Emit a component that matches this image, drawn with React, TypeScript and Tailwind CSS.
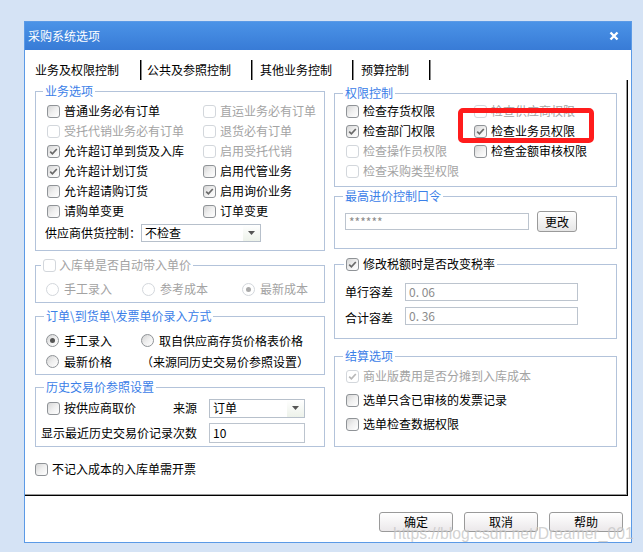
import clsx from 'clsx'
import type { ReactNode } from 'react'

function Box({ checked = false, disabled = false }: { checked?: boolean; disabled?: boolean }) {
  return (
    <span
      className={clsx(
        'flex h-[13px] w-[13px] shrink-0 items-center justify-center rounded-[3px] border',
        disabled
          ? 'border-[#d3d7dc] bg-white'
          : 'border-[#8f9397] bg-gradient-to-br from-[#d6d6d6] via-[#f0f0f0] to-white',
      )}
    >
      {checked && (
        <svg width="9" height="9" viewBox="0 0 9 9" fill="none">
          <path d="M1.2 4.6 3.4 6.8 7.8 2" stroke={disabled ? '#b8b8b8' : '#6a6a6a'} strokeWidth="1.7" />
        </svg>
      )}
    </span>
  )
}

function Dot({ on = false, disabled = false }: { on?: boolean; disabled?: boolean }) {
  return (
    <span
      className={clsx(
        'flex h-[13px] w-[13px] shrink-0 items-center justify-center rounded-full border',
        disabled
          ? 'border-[#d3d7dc] bg-white'
          : 'border-[#8f9397] bg-gradient-to-br from-[#d2d2d2] via-[#efefef] to-white',
      )}
    >
      {on && <span className={clsx('h-[5px] w-[5px] rounded-full', disabled ? 'bg-[#a9a9a9]' : 'bg-[#555]')} />}
    </span>
  )
}

function Check({
  label,
  checked,
  disabled,
  className,
}: {
  label: string
  checked?: boolean
  disabled?: boolean
  className?: string
}) {
  return (
    <div className={clsx('flex items-center gap-[4px]', className ?? 'h-[20px]')}>
      <Box checked={checked} disabled={disabled} />
      <span className={clsx('whitespace-nowrap', disabled ? 'text-[#a3a3a3]' : 'text-black')}>{label}</span>
    </div>
  )
}

function Radio({ label, on, disabled }: { label: string; on?: boolean; disabled?: boolean }) {
  return (
    <div className="flex items-center gap-[5px]">
      <Dot on={on} disabled={disabled} />
      <span className={clsx('whitespace-nowrap', disabled ? 'text-[#a3a3a3]' : 'text-black')}>{label}</span>
    </div>
  )
}

function Group({
  legend,
  className,
  legendClass,
  children,
}: {
  legend: ReactNode
  className?: string
  legendClass?: string
  children?: ReactNode
}) {
  return (
    <div className={clsx('border border-[#b3c3da]', className)}>
      <div
        className={clsx(
          '-mt-[9px] flex h-[16px] w-fit items-center bg-white px-[2px]',
          legendClass ?? 'ml-[7px] text-[#3b80e8]',
        )}
      >
        {legend}
      </div>
      {children}
    </div>
  )
}

function Select({ value, className }: { value: string; className?: string }) {
  return (
    <div className={clsx('flex items-center border border-[#b7c0cb] bg-white', className)}>
      <span className="flex-1 pl-[3px]">{value}</span>
      <span className="flex h-full w-[17px] items-center justify-center bg-gradient-to-b from-white to-[#edf2ea]">
        <svg width="7" height="4" viewBox="0 0 7 4">
          <path d="M0 0h7L3.5 4z" fill="#555" />
        </svg>
      </span>
    </div>
  )
}

function Field({ value, className }: { value: string; className?: string }) {
  return (
    <div className={clsx('flex items-center border border-[#bcc4ce] bg-white pl-[3px] text-[#8c8c8c]', className)}>
      {value}
    </div>
  )
}

function Button({ label }: { label: string }) {
  return (
    <button className="flex h-[20px] w-[74px] items-center justify-center rounded-[3px] border border-[#9a9a9a] bg-gradient-to-b from-white to-[#ebe8ea] text-black">
      {label}
    </button>
  )
}

const tabs = [
  { name: '业务及权限控制', cls: 'w-[106px]' },
  { name: '公共及参照控制', cls: 'w-[111px] pl-[6px]' },
  { name: '其他业务控制', cls: 'w-[101px] pl-[8px]' },
  { name: '预算控制', cls: 'w-[77px] pl-[8px]' },
]

export default function App() {
  return (
    <div className="h-[552px] w-[643px] overflow-hidden bg-[#d5e3f5] pl-[24px] pt-[21px] font-['Noto_Sans_CJK_SC','Noto_Sans',sans-serif] text-[12px] leading-[16px] text-black">
      <div className="flex h-[522px] w-[608px] flex-col border border-[#5b9ae6] bg-white">
        {/* title bar */}
        <div className="flex h-[28px] shrink-0 items-center justify-between bg-gradient-to-b from-[#4b93e7] to-[#387bd6] pl-[3px] pr-[12px] text-white">
          <span>采购系统选项</span>
          <svg width="10" height="10" viewBox="0 0 10 10">
            <path d="M1.5 1.5 8.5 8.5M8.5 1.5 1.5 8.5" stroke="white" strokeWidth="2.4" />
          </svg>
        </div>

        {/* tabs */}
        <div className="flex h-[30px] shrink-0 items-end pl-[10px]">
          {tabs.map((t) => (
            <div
              key={t.name}
              className={clsx(
                'flex h-[20px] items-center border-r border-black shadow-[1px_0_0_#8a8a8a]',
                t.cls,
              )}
            >
              {t.name}
            </div>
          ))}
        </div>

        {/* tab page */}
        <div className="h-[416px] w-[603px] shrink-0 border-b border-r border-black pl-[10px] pt-[11px] shadow-[inset_-1px_-1px_0_#9a9a9a]">
          <div className="flex gap-[9px]">
            {/* left column */}
            <div className="flex w-[290px] flex-col">
              <Group legend="业务选项" className="h-[160px]">
                <div className="mt-[2px] grid grid-cols-[156px_1fr] pl-[11px]">
                  <Check label="普通业务必有订单" />
                  <Check label="直运业务必有订单" disabled />
                  <Check label="受托代销业务必有订单" disabled />
                  <Check label="退货必有订单" disabled />
                  <Check label="允许超订单到货及入库" checked />
                  <Check label="启用受托代销" disabled />
                  <Check label="允许超计划订货" checked />
                  <Check label="启用代管业务" />
                  <Check label="允许超请购订货" />
                  <Check label="启用询价业务" checked />
                  <Check label="请购单变更" />
                  <Check label="订单变更" />
                </div>
                <div className="-ml-[2px] mt-[3px] flex h-[18px] items-center pl-[11px]">
                  <span className="w-[96px]">供应商供货控制：</span>
                  <Select value="不检查" className="h-[18px] w-[120px]" />
                </div>
              </Group>

              <Group
                legend={
                  <div className="flex items-center gap-[3px] text-[#a3a3a3]">
                    <Box disabled />
                    <span>入库单是否自动带入单价</span>
                  </div>
                }
                legendClass="ml-[5px]"
                className="mt-[14px] h-[38px]"
              >
                <div className="mt-[6px] grid h-[20px] grid-cols-[96px_100px_1fr] items-center pl-[10px]">
                  <Radio label="手工录入" disabled />
                  <Radio label="参考成本" disabled />
                  <Radio label="最新成本" on disabled />
                </div>
              </Group>

              <Group legend="订单\到货单\发票单价录入方式" className="mt-[13px] h-[59px]" legendClass="ml-[8px] text-[#3b80e8]">
                <div className="mt-[6px] grid grid-cols-[95px_1fr] pl-[10px]">
                  <div className="flex h-[21px] items-center">
                    <Radio label="手工录入" on />
                  </div>
                  <div className="flex h-[21px] items-center">
                    <Radio label="取自供应商存货价格表价格" on={false} />
                  </div>
                  <div className="flex h-[21px] items-center">
                    <Radio label="最新价格" />
                  </div>
                  <div className="flex h-[21px] items-center whitespace-nowrap">（来源同历史交易价参照设置）</div>
                </div>
              </Group>

              <Group legend="历史交易价参照设置" className="mt-[12px] h-[60px]" legendClass="ml-[8px] text-[#3b80e8]">
                <div className="mt-[3px] flex h-[20px] items-center pl-[11px]">
                  <Check label="按供应商取价" className="h-[20px] w-[126px]" />
                  <span className="w-[36px]">来源</span>
                  <Select value="订单" className="h-[19px] w-[96px]" />
                </div>
                <div className="mt-[5px] flex h-[20px] items-center pl-[5px]">
                  <span className="w-[168px] whitespace-nowrap">显示最近历史交易价记录次数</span>
                  <div className="flex h-[20px] w-[96px] items-center border border-[#bcc4ce] pl-[3px]">10</div>
                </div>
              </Group>
            </div>

            {/* right column */}
            <div className="mt-[2px] flex w-[283px] flex-col">
              <Group legend="权限控制" className="relative h-[94px]" legendClass="ml-[8px] text-[#3b80e8]">
                <div className="grid grid-cols-[128px_1fr] pl-[11px]">
                  <Check label="检查存货权限" />
                  <Check label="检查供应商权限" disabled />
                  <Check label="检查部门权限" checked />
                  <Check label="检查业务员权限" checked />
                  <Check label="检查操作员权限" disabled />
                  <Check label="检查金额审核权限" />
                  <Check label="检查采购类型权限" disabled />
                </div>
                <div className="absolute left-[123px] top-[14px] h-[35px] w-[136px] rounded-[5px] border-[5px] border-[#ff1c1c]" />
              </Group>

              <Group legend="最高进价控制口令" className="mt-[9px] h-[53px]" legendClass="ml-[8px] text-[#3b80e8]">
                <div className="mt-[7px] flex h-[21px] items-center gap-[8px] pl-[10px]">
                  <Field value="******" className="h-[17px] w-[184px]" />
                  <button className="flex h-[21px] w-[40px] items-center justify-center rounded-[3px] border border-[#9a9a9a] bg-gradient-to-b from-white to-[#e6e6e6]">
                    更改
                  </button>
                </div>
              </Group>

              <Group
                legend={
                  <div className="flex items-center gap-[4px]">
                    <Box checked />
                    <span>修改税额时是否改变税率</span>
                  </div>
                }
                legendClass="ml-[9px]"
                className="mt-[15px] h-[75px]"
              >
                <div className="mt-[11px] flex h-[18px] items-center pl-[10px]">
                  <span className="w-[60px]">单行容差</span>
                  <Field value="0. 06" className="h-[18px] w-[173px]" />
                </div>
                <div className="mt-[6px] flex h-[18px] items-center pl-[10px]">
                  <span className="w-[60px] pt-[3px]">合计容差</span>
                  <Field value="0. 36" className="h-[18px] w-[173px]" />
                </div>
              </Group>

              <Group legend="结算选项" className="mt-[17px] h-[91px]" legendClass="ml-[8px] text-[#3b80e8]">
                <div className="flex flex-col pl-[11px]">
                  <Check label="商业版费用是否分摊到入库成本" checked disabled className="h-[24px]" />
                  <Check label="选单只含已审核的发票记录" className="h-[24px]" />
                  <Check label="选单检查数据权限" className="h-[24px]" />
                </div>
              </Group>
            </div>
          </div>

          <Check label="不记入成本的入库单需开票" className="mt-[12px] h-[20px]" />
        </div>

        {/* buttons */}
        <div className="relative mt-[16px] flex h-[20px] justify-end gap-[11px] pr-[8px]">
          <Button label="确定" />
          <Button label="取消" />
          <Button label="帮助" />
          <span className="pointer-events-none absolute left-[368px] top-[13px] whitespace-nowrap font-['Liberation_Sans',sans-serif] text-[15.7px] leading-[18px] text-[#c6c6c6]/80">
            https://blog.csdn.net/Dreamer_001
          </span>
        </div>
      </div>
    </div>
  )
}
